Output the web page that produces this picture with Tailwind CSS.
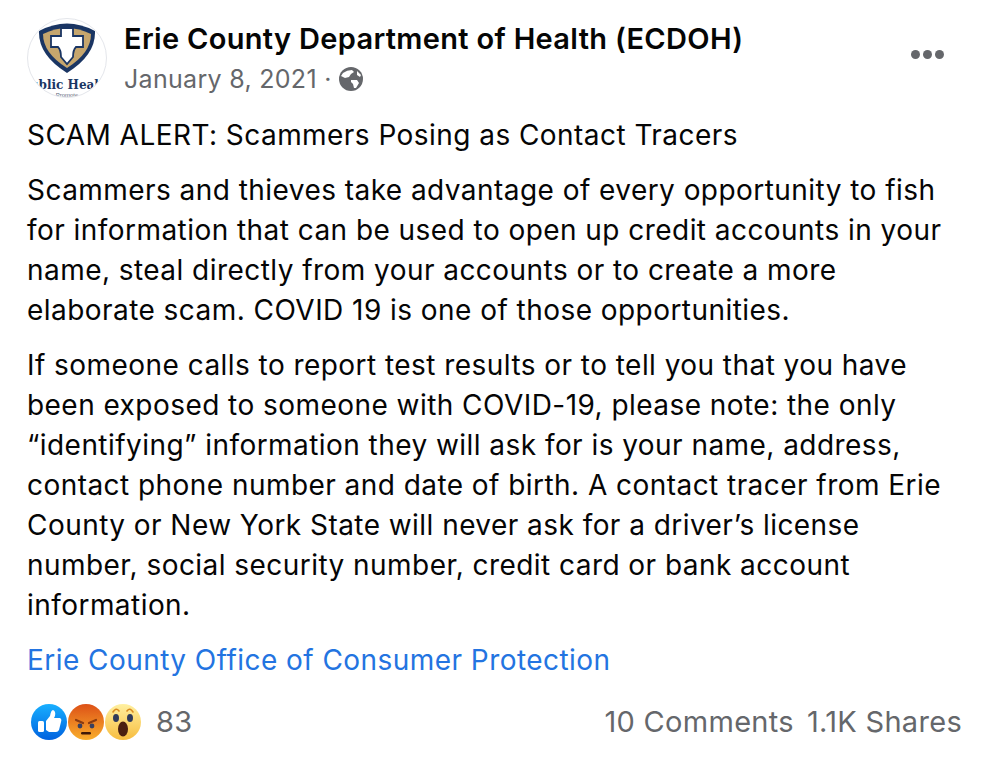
<!DOCTYPE html>
<html lang="en">
<head>
  <title>Post</title>
  <script src="https://cdn.jsdelivr.net/npm/@tailwindcss/browser@4"></script>
</head>
<body class="bg-white">
  <div class="w-[988px] h-[758px] overflow-hidden pl-[27px] pr-[26px] pt-[18px] font-['Inter',sans-serif] text-[28px] tracking-[0.45px] leading-[40px] text-[#050505]">

    <div class="flex h-[80px]">
      <div class="relative w-[80px] h-[80px] rounded-full border border-[#e4e6eb] overflow-hidden shrink-0 bg-white">
        <svg class="absolute left-[10px] top-[3px]" width="58" height="52" viewBox="0 0 58 52">
          <path d="M1 9 Q29 -6 57 9 Q58 33 29 51 Q0 33 1 9Z" fill="#1a3563"/>
          <path d="M5 12 Q29 0 53 12 Q53 31 29 46 Q5 31 5 12Z" fill="#c6a66d"/>
          <path d="M23 6 H35 V14 H45 V25 H38 Q35 28 35 35 L29 42 L23 35 Q23 28 20 25 H13 V14 H23Z" fill="#fff" stroke="#1a3563" stroke-width="1.8"/>
        </svg>
        <div class="absolute left-[-10px] top-[58px] w-[98px] text-center whitespace-nowrap tracking-normal font-['DejaVu_Serif',serif] font-bold text-[12px] leading-[16px] text-[#1a3563]">Public Health</div>
        <div class="absolute left-0 top-[73px] w-[78px] text-center whitespace-nowrap tracking-normal font-['Liberation_Sans',sans-serif] text-[6px] leading-[6px] text-[#5a6478]">Promote</div>
      </div>

      <div class="ml-[17px] flex-1">
        <div class="font-semibold text-[29px] tracking-[0.32px] leading-[40px] mt-[1px] whitespace-nowrap">Erie County Department of Health (ECDOH)</div>
        <div class="flex items-center text-[#65676b] text-[25px] tracking-[0.3px] leading-[40px] whitespace-nowrap">
          <span>January 8, 2021 ·</span>
          <svg class="ml-[7px]" width="24" height="24" viewBox="0 0 24 24">
            <circle cx="12" cy="12" r="12" fill="#65676b"/>
            <path d="M4 6 Q8 3 13 3 L15 5 L12 7 L10 10 L6 11 L2 9Z M12 13 L18 13 L20 16 L17 21 L15 21 L14 17 L12 15Z M18 4 L22 8 L21 10 L18 8Z" fill="#fff"/>
          </svg>
        </div>
      </div>

      <div class="flex gap-[3px] mt-[32px] mr-[18px] h-[10px]">
        <span class="w-[9px] h-[9px] rounded-full bg-[#65676b]"></span>
        <span class="w-[9px] h-[9px] rounded-full bg-[#65676b]"></span>
        <span class="w-[9px] h-[9px] rounded-full bg-[#65676b]"></span>
      </div>
    </div>

    <div class="mt-[17px] whitespace-nowrap">
      <p>SCAM ALERT: Scammers Posing as Contact Tracers</p>
      <p class="mt-[15px]">Scammers and thieves take advantage of every opportunity to fish<br>for information that can be used to open up credit accounts in your<br>name, steal directly from your accounts or to create a more<br>elaborate scam. COVID 19 is one of those opportunities.</p>
      <p class="mt-[15px]">If someone calls to report test results or to tell you that you have<br>been exposed to someone with COVID-19, please note: the only<br>“identifying” information they will ask for is your name, address,<br>contact phone number and date of birth. A contact tracer from Erie<br>County or New York State will never ask for a driver’s license<br>number, social security number, credit card or bank account<br>information.</p>
      <p class="mt-[15px] text-[#2374e1]">Erie County Office of Consumer Protection</p>
    </div>

    <div class="flex items-center mt-[22px] h-[40px] text-[#65676b]">
      <div class="flex ml-[3px]">
        <svg class="relative z-30" width="38" height="38" viewBox="0 0 38 38">
          <defs>
            <linearGradient id="like" x1="0" y1="0" x2="0" y2="1"><stop offset="0" stop-color="#18afff"/><stop offset="1" stop-color="#0062df"/></linearGradient>
            <linearGradient id="angry" x1="0" y1="0" x2="0" y2="1"><stop offset="0" stop-color="#dd5117"/><stop offset="1" stop-color="#f9ae2c"/></linearGradient>
            <linearGradient id="wow" x1="0" y1="0" x2="0" y2="1"><stop offset="0" stop-color="#fff0a0"/><stop offset="1" stop-color="#f7bd3f"/></linearGradient>
          </defs>
          <circle cx="19" cy="19" r="18" fill="url(#like)"/>
          <rect x="8" y="18" width="6" height="11" rx="1.5" fill="#fff"/>
          <path d="M16 18 L20 13 Q21 7 23 7 Q26 8 25 13 L24 15 H30 Q32 16 31 19 L29 27 Q28 29 26 29 H19 L16 27Z" fill="#fff"/>
        </svg>
        <svg class="relative z-20 -ml-[1px]" width="38" height="38" viewBox="0 0 38 38">
          <circle cx="19" cy="19" r="18" fill="url(#angry)"/>
          <path d="M9 17 L16 20 M29 17 L22 20" stroke="#8a3a10" stroke-width="2.2" stroke-linecap="round"/>
          <circle cx="13" cy="23" r="2.4" fill="#3a4060"/>
          <circle cx="25" cy="23" r="2.4" fill="#3a4060"/>
          <rect x="14" y="29" width="10" height="2.6" rx="1.3" fill="#3e1a08"/>
        </svg>
        <svg class="relative z-10 -ml-[1px]" width="38" height="38" viewBox="0 0 38 38">
          <circle cx="19" cy="19" r="18" fill="url(#wow)"/>
          <path d="M9 9 Q12 4 15 8 M23 8 Q26 4 29 9" fill="none" stroke="#d98a20" stroke-width="1.6" stroke-linecap="round"/>
          <ellipse cx="12" cy="15" rx="3" ry="4" fill="#2f3a5a"/>
          <ellipse cx="26" cy="15" rx="3" ry="4" fill="#2f3a5a"/>
          <ellipse cx="19" cy="26" rx="5" ry="7.5" fill="#4a1f10"/>
        </svg>
      </div>
      <span class="ml-[14px] text-[29px] tracking-[0.3px]">83</span>
      <div class="ml-auto flex gap-[13px] text-[29px] tracking-[0.3px] whitespace-nowrap">
        <span>10 Comments</span>
        <span>1.1K Shares</span>
      </div>
    </div>
  </div>
</body>
</html>
